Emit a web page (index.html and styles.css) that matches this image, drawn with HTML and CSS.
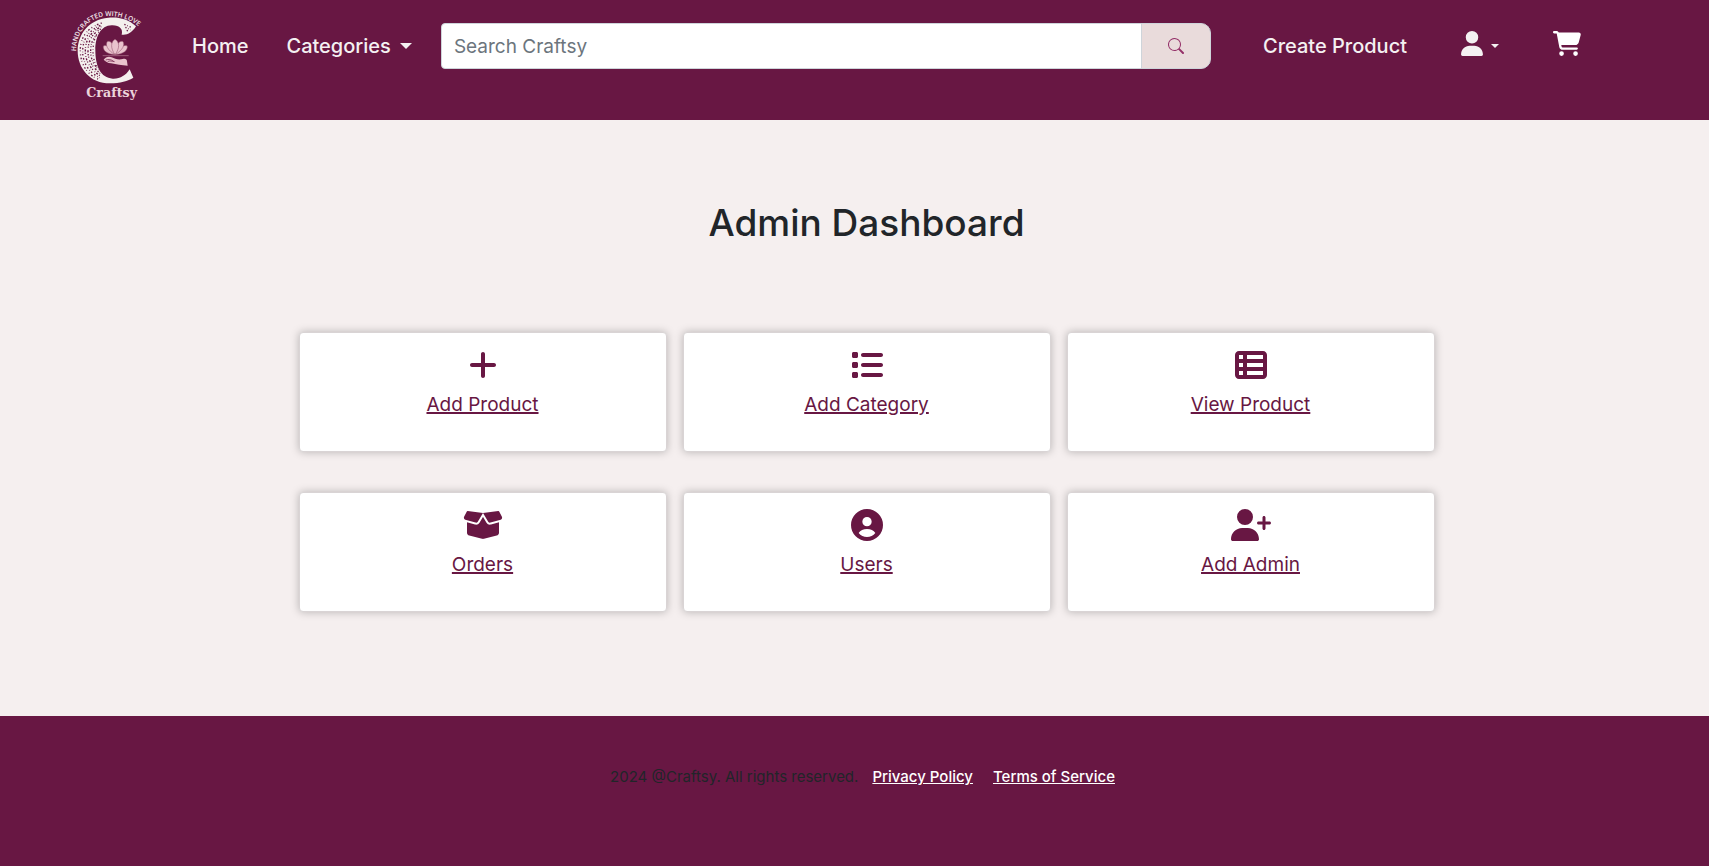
FILE: index.html
```html
<!DOCTYPE html>
<html lang="en">
<head>
<meta charset="utf-8">
<meta name="viewport" content="width=device-width, initial-scale=1">
<title>Craftsy - Admin Dashboard</title>
<link rel="stylesheet" href="styles.css">
</head>
<body>
<header class="site-header">
  <a class="logo" href="#" aria-label="Craftsy home">
    <svg width="100" height="110" viewBox="0 0 300 330">
      <defs>
        <path id="motto" d="M48 154C48 92 92 48 147 48C185 48 220 62 250 92"/>
        <clipPath id="crescent"><path d="M145 53C85 58 53 105 53 152C53 205 90 250 150 250L130 229C112 214 106 186 106 150C106 120 113 97 128 85Z"/></clipPath>
      </defs>
      <path fill="#f4f0ee" d="M228 79C205 57 175 50 145 53C85 58 53 105 53 152C53 205 90 250 150 250C180 250 204 243 220 233L209 208C198 226 180 237 158 236C122 233 106 200 106 150C106 110 122 77 155 76C178 75 190 87 185 104C201 107 217 97 228 79Z"/>
      <g clip-path="url(#crescent)" fill="none" stroke="#681743" stroke-width="4">
        <path stroke-dasharray="3 7 5 5 2 9" d="M125 69C77 84 59 118 61 157C63 196 84 226 116 238"/>
        <path stroke-dasharray="5 6 2 5 4 8" d="M121 76C83 94 68 120 68 155C68 188 87 218 119 233"/>
        <path stroke-dasharray="2 5 6 4 3 7" d="M124 80C88 98 76 122 76 154C76 183 92 210 123 229"/>
        <path stroke-dasharray="4 4 3 8 6 5" d="M123 87C95 101 84 124 84 154C84 181 97 203 124 222"/>
        <path stroke-dasharray="3 6 5 4 2 5" d="M118 97C98 113 92 130 92 154C92 177 101 196 119 211"/>
        <path stroke-dasharray="2 8 4 6" d="M108 108C101 122 99 138 99 154C99 170 103 188 112 204"/>
      </g>
      <path fill="none" stroke="#681743" stroke-width="4" stroke-dasharray="4 5 2 6" d="M193 73L214 82M196 82L212 90M200 91L208 94"/>
      <g fill="#e9c3cd" stroke="#8d4665" stroke-width="1.500">
        <path d="M165 164C139 162 128 151 130 138C142 132 158 145 165 164Z"/>
        <path d="M165 164C191 162 204 151 202 138C190 132 173 145 165 164Z"/>
        <path d="M165 164C144 151 133 134 143 124C157 121 164 142 165 164Z"/>
        <path d="M165 164C187 151 197 134 188 124C174 121 166 142 165 164Z"/>
        <path d="M165 164C151 145 152 125 165 118C179 125 180 145 165 164Z"/>
      </g>
      <path stroke="#b87e95" stroke-width="2" d="M128 167H206"/>
      <path fill="#e9c3cd" d="M131 179C137 171 146 168 155 172C165 177 176 180 188 177C196 174 201 178 201 184L203 197C184 196 170 193 153 190C142 189 137 184 131 179Z"/>
      <path fill="none" stroke="#681743" stroke-width="2" d="M137 180C146 177 153 178 161 184M143 185C149 181 156 184 164 185"/>
      <text class="logo-motto"><textPath href="#motto">HANDCRAFTED WITH LOVE</textPath></text>
      <text class="logo-name" x="155" y="291" text-anchor="middle">Craftsy</text>
    </svg>
  </a>
  <nav class="nav-main" aria-label="Main">
    <a class="nav-link" href="#">Home</a>
    <button class="nav-link nav-toggle" type="button" aria-haspopup="true">Categories <span class="caret"></span></button>
  </nav>
  <form class="search" role="search">
    <input class="search-input" type="search" placeholder="Search Craftsy" aria-label="Search Craftsy">
    <button class="search-button" type="button" aria-label="Search">
      <svg width="16" height="16" viewBox="0 0 16 16" fill="currentColor"><path d="M11.742 10.344a6.500 6.500 0 1 0-1.397 1.398h-.001c.03.04.062.078.098.115l3.850 3.850a1 1 0 0 0 1.415-1.414l-3.850-3.850a1.007 1.007 0 0 0-.115-.1zM12 6.500a5.500 5.500 0 1 1-11 0 5.500 5.500 0 0 1 11 0z"/></svg>
    </button>
  </form>
  <nav class="nav-user" aria-label="Account">
    <a class="nav-link" href="#">Create Product</a>
    <button class="nav-link account" type="button" aria-label="Account" aria-haspopup="true">
      <svg width="22" height="25" viewBox="0 0 448 512" fill="currentColor"><path d="M224 256A128 128 0 1 0 224 0a128 128 0 1 0 0 256zm-45.700 48C79.800 304 0 383.800 0 482.300C0 498.700 13.300 512 29.700 512H418.300c16.400 0 29.700-13.300 29.700-29.700C448 383.800 368.200 304 269.700 304H178.300z"/></svg>
      <span class="caret caret-small"></span>
    </button>
    <a class="nav-link cart" href="#" aria-label="Cart">
      <svg width="28" height="25" viewBox="0 0 576 512" fill="currentColor"><path d="M0 24C0 10.700 10.700 0 24 0H69.500c22 0 41.500 12.800 50.600 32h411c26.300 0 45.500 25 38.600 50.400l-41 152.300c-8.500 31.400-37 53.300-69.500 53.300H170.700l5.400 28.500c2.200 11.300 12.100 19.500 23.600 19.500H488c13.300 0 24 10.700 24 24s-10.700 24-24 24H199.700c-34.600 0-64.300-24.600-70.700-58.500L77.400 54.500c-.7-3.800-4-6.500-7.900-6.500H24C10.700 48 0 37.300 0 24zM128 464a48 48 0 1 1 96 0 48 48 0 1 1-96 0zm336-48a48 48 0 1 1 0 96 48 48 0 1 1 0-96z"/></svg>
    </a>
  </nav>
</header>

<main class="dashboard">
  <h1 class="title">Admin Dashboard</h1>
  <div class="cards">
    <section class="card">
      <svg class="card-icon" viewBox="0 0 448 512"><path d="M256 80c0-17.700-14.300-32-32-32s-32 14.300-32 32V224H48c-17.700 0-32 14.300-32 32s14.300 32 32 32H192V432c0 17.700 14.300 32 32 32s32-14.300 32-32V288H400c17.700 0 32-14.300 32-32s-14.300-32-32-32H256V80z"/></svg>
      <a class="card-link" href="#">Add Product</a>
    </section>
    <section class="card">
      <svg class="card-icon" viewBox="0 0 512 512"><path d="M40 48C26.700 48 16 58.700 16 72v48c0 13.300 10.700 24 24 24H88c13.300 0 24-10.700 24-24V72c0-13.300-10.700-24-24-24H40zM192 64c-17.700 0-32 14.300-32 32s14.300 32 32 32H480c17.700 0 32-14.300 32-32s-14.300-32-32-32H192zm0 160c-17.700 0-32 14.300-32 32s14.300 32 32 32H480c17.700 0 32-14.300 32-32s-14.300-32-32-32H192zm0 160c-17.700 0-32 14.300-32 32s14.300 32 32 32H480c17.700 0 32-14.300 32-32s-14.300-32-32-32H192zM16 232v48c0 13.300 10.700 24 24 24H88c13.300 0 24-10.700 24-24V232c0-13.300-10.700-24-24-24H40c-13.300 0-24 10.700-24 24zM40 368c-13.300 0-24 10.700-24 24v48c0 13.300 10.700 24 24 24H88c13.300 0 24-10.700 24-24V392c0-13.300-10.700-24-24-24H40z"/></svg>
      <a class="card-link" href="#">Add Category</a>
    </section>
    <section class="card">
      <svg class="card-icon" viewBox="0 0 512 512"><path d="M0 96C0 60.700 28.700 32 64 32H448c35.300 0 64 28.700 64 64V416c0 35.300-28.700 64-64 64H64c-35.300 0-64-28.700-64-64V96zm64 0v64h64V96H64zm384 0H192v64H448V96zM64 224v64h64V224H64zm384 0H192v64H448V224zM64 352v64h64V352H64zm384 0H192v64H448V352z"/></svg>
      <a class="card-link" href="#">View Product</a>
    </section>
    <section class="card">
      <svg class="card-icon" viewBox="0 0 640 512"><path d="M58.900 42.100c3-6.100 9.600-9.600 16.300-8.700L320 64 564.800 33.400c6.700-.8 13.300 2.700 16.300 8.700l41.700 83.400c9 17.900-.6 39.600-19.800 45.100L439.600 217.300c-13.900 4-28.800-1.900-36.200-14.300L320 64 236.600 203c-7.400 12.400-22.300 18.300-36.200 14.300L37.100 170.600c-19.300-5.500-28.800-27.200-19.800-45.100L58.900 42.100zM321.100 128l54.900 91.400c14.900 24.800 44.600 36.600 72.500 28.600L576 211.600v167c0 22-15 41.200-36.400 46.600l-204.100 51c-10.200 2.600-20.900 2.600-31 0l-204.100-51C79 419.700 64 400.500 64 378.500v-167L191.600 248c27.800 8 57.600-3.800 72.500-28.600L318.900 128h2.200z"/></svg>
      <a class="card-link" href="#">Orders</a>
    </section>
    <section class="card">
      <svg class="card-icon" viewBox="0 0 96 96"><path fill-rule="evenodd" d="M48 0a48 48 0 1 1 0 96a48 48 0 1 1 0-96zM48 24a14 14 0 1 0 0 28a14 14 0 1 0 0-28zM23 72C29 80 38 84 48 84S67 80 73 72C68 64 59 60 48 60S28 64 23 72z"/></svg>
      <a class="card-link" href="#">Users</a>
    </section>
    <section class="card">
      <svg class="card-icon" viewBox="0 0 640 512"><path d="M96 128a128 128 0 1 1 256 0A128 128 0 1 1 96 128zM0 482.300C0 383.800 79.800 304 178.300 304h91.400C368.200 304 448 383.800 448 482.300c0 16.400-13.300 29.700-29.700 29.700H29.700C13.300 512 0 498.700 0 482.300zM504 312V248H440c-13.300 0-24-10.700-24-24s10.700-24 24-24h64V136c0-13.300 10.700-24 24-24s24 10.700 24 24v64h64c13.300 0 24 10.700 24 24s-10.700 24-24 24H552v64c0 13.300-10.700 24-24 24s-24-10.700-24-24z"/></svg>
      <a class="card-link" href="#">Add Admin</a>
    </section>
  </div>
</main>

<footer class="site-footer">
  <span class="copyright">2024 @Craftsy. All rights reserved.</span>
  <a class="footer-link" href="#">Privacy Policy</a>
  <a class="footer-link" href="#">Terms of Service</a>
</footer>
</body>
</html>
```
FILE: styles.css
```css
*,
*::before,
*::after {
  box-sizing: border-box;
}

body {
  margin: 0;
  min-height: 100vh;
  display: flex;
  flex-direction: column;
  background: #f5efef;
  color: #212529;
  font-family: Inter, "Liberation Sans", sans-serif;
  font-size: 15px;
  line-height: 24px;
}

svg {
  display: block;
}

.site-header {
  display: flex;
  align-items: flex-start;
  padding: 0 128px 10px 60px;
  background: #681743;
}

.logo {
  flex: none;
}

.logo-motto {
  fill: #f4e8ec;
  font: 600 20px "Open Sans", sans-serif;
}

.logo-name {
  fill: #ecd3da;
  font: 700 38px "DejaVu Serif", serif;
}

.nav-main,
.nav-user,
.search {
  display: flex;
  align-items: center;
  height: 46px;
  margin-top: 23px;
}

.nav-main {
  gap: 38px;
  margin-left: 32px;
}

.nav-link {
  display: flex;
  align-items: center;
  padding: 0;
  border: 0;
  background: none;
  color: #f4f1f2;
  font: 500 20px/30px Inter, "Liberation Sans", sans-serif;
  text-decoration: none;
  white-space: nowrap;
  cursor: pointer;
}

.nav-toggle {
  gap: 9px;
}

.caret {
  border-top: 6px solid currentColor;
  border-left: 6px solid transparent;
  border-right: 6px solid transparent;
}

.caret-small {
  border-width: 4px 4px 0;
}

.search {
  flex: 1;
  margin-left: 29px;
}

.search-input {
  flex: 1;
  min-width: 0;
  height: 46px;
  padding: 0 12px;
  border: 1px solid #ced4da;
  border-radius: 4px 0 0 4px;
  background: #fff;
  color: #212529;
  font: 400 19px/30px Inter, "Liberation Sans", sans-serif;
  appearance: none;
}

.search-input::placeholder {
  color: #6c757d;
  opacity: 1;
}

.search-button {
  display: flex;
  align-items: center;
  justify-content: center;
  width: 70px;
  height: 46px;
  margin-left: -1px;
  padding: 0;
  border: 1px solid #ced4da;
  border-radius: 0 10px 10px 0;
  background: #e9dbdb;
  color: #943068;
}

.nav-user {
  gap: 54px;
  margin-left: 52px;
}

.account {
  gap: 8px;
}

.account svg,
.cart svg {
  margin-bottom: 5px;
}

.cart {
  color: #fff;
}

.dashboard {
  flex: 1;
  width: 100%;
  max-width: 1176px;
  margin: 0 auto;
  padding: 79px 0 103px 24px;
}

.title {
  margin: 0 0 85px;
  font-size: 37px;
  font-weight: 500;
  line-height: 48px;
  text-align: center;
}

.cards {
  display: grid;
  grid-template-columns: repeat(3, 1fr);
  gap: 40px 16px;
  padding: 0 8px;
}

.card {
  display: flex;
  flex-direction: column;
  align-items: center;
  gap: 8px;
  min-height: 120px;
  padding: 16px;
  border: 1px solid #d9d4d5;
  border-radius: 4px;
  background: #fff;
  box-shadow: 0 0 8px rgba(0, 0, 0, 0.25);
}

.card-icon {
  height: 32px;
  fill: #681743;
}

.card-link {
  color: #681743;
  font-size: 19px;
  line-height: 32px;
  text-decoration-thickness: 2px;
}

.site-footer {
  display: flex;
  justify-content: center;
  padding: 49px 24px 77px 40px;
  background: #681743;
}

.footer-link {
  margin-left: 14px;
  color: #fff;
  font-weight: 500;
}

.footer-link + .footer-link {
  margin-left: 20px;
}
```
